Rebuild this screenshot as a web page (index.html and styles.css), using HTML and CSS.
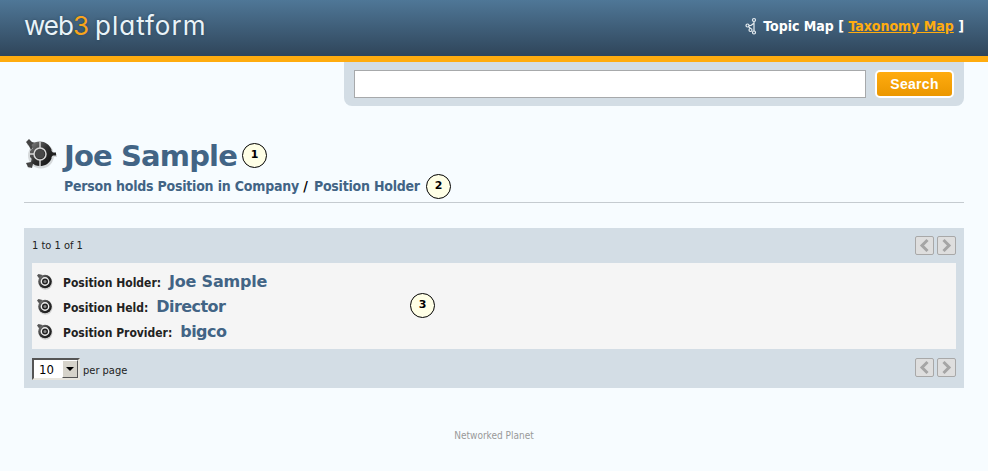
FILE: index.html
```html
<!DOCTYPE html>
<html lang="en">
<head>
<meta charset="utf-8">
<title>Joe Sample - web3 platform</title>
<link rel="stylesheet" href="styles.css">
</head>
<body>
<svg class="defs" width="0" height="0" aria-hidden="true">
  <defs>
    <linearGradient id="metal" x1="0" y1="0" x2="1" y2="1"><stop offset="0" stop-color="#858585"/><stop offset=".5" stop-color="#303030"/><stop offset="1" stop-color="#111"/></linearGradient>
    <symbol id="gear" viewBox="0 0 34 34">
      <g fill="none" stroke="#999" stroke-width="3" opacity=".35" transform="translate(1 1.5)"><circle cx="16" cy="16" r="11.500"/><path d="M3 4l6 6M3 28l6-6M27 16h5"/></g>
      <path d="M2 4l3-3 3 3 4 1-5 7-2-4zM2 25l2 4 4 1 1-4 4-1-5-6-1 5z" fill="#444"/>
      <path d="M25 11l4 3.500h3v3h-3l-4 3.500z" fill="#222"/>
      <path d="M16 3.500c5 0 9.500 3 11.500 8v9c-2 5-6.500 7.500-11.500 7.500-4 0-6-1-8.500-3.500L9 22l-3-3v-6l3-3-1.500-3C10 4.500 12 3.500 16 3.500z" fill="url(#metal)"/>
      <circle cx="16" cy="16" r="6" fill="none" stroke="#d8d8d8" stroke-width="1.500"/>
      <path d="M16 3.500V10M16 22v6.500M6 16h4" stroke="#d8d8d8" stroke-width="1.400"/>
      <circle cx="16" cy="16" r="4.500" fill="#484848"/>
    </symbol>
    <symbol id="dot" viewBox="0 0 18 18">
      <circle cx="9.500" cy="9.800" r="7" fill="#aaa" opacity=".5"/>
      <path d="M1 2.500L2.500 1l4 1-3 4z" fill="#555"/>
      <circle cx="9" cy="8.500" r="6.800" fill="url(#metal)"/>
      <circle cx="9" cy="8.500" r="3.700" fill="#222" stroke="#f0f0f0" stroke-width="1.400"/>
      <circle cx="9" cy="8.500" r="1.500" fill="#888"/>
    </symbol>
  </defs>
</svg>
<header class="header">
  <div class="logo"><span class="logo-web">web<span class="logo-num">3</span></span><span class="logo-platform">platform</span></div>
  <nav class="maps">
    <svg class="map-icon" viewBox="0 0 12 18" fill="none" stroke="#e8eef2" stroke-width="1.200"><circle cx="9" cy="3" r="1.500"/><circle cx="2.500" cy="8.500" r="1.500"/><circle cx="5.500" cy="13" r="1.500"/><circle cx="9" cy="15.500" r="1.500"/><path d="M9 4.500v9.500M4 8.500h2l2.500-2M5.500 11.500l-2-2"/></svg>
    <span class="map-text">Topic Map [ <a href="#">Taxonomy Map</a> ]</span>
  </nav>
</header>
<main class="page">
  <form class="search">
    <input class="query" type="text" aria-label="Search">
    <button class="go" type="button"><span>Search</span></button>
  </form>
  <section class="title">
    <svg class="title-icon"><use href="#gear"/></svg>
    <div>
      <div class="line"><h1>Joe Sample</h1><span class="mark">1</span></div>
      <div class="line crumb-line"><p class="crumb"><a>Person holds Position in Company</a> / <a>Position Holder</a></p><span class="mark">2</span></div>
    </div>
  </section>
  <section class="panel">
    <div class="bar"><span class="small count">1 to 1 of 1</span>
      <div class="pager"><button aria-label="Previous"><svg viewBox="0 0 15 15"><path d="M10.500 2L5 7.500l5.500 5.500"/></svg></button><button aria-label="Next"><svg viewBox="0 0 15 15"><path d="M4.500 2L10 7.500 4.500 13"/></svg></button></div>
    </div>
    <div class="list">
      <div class="row"><svg class="dot"><use href="#dot"/></svg><span class="label">Position Holder:</span><a class="value">Joe Sample</a></div>
      <div class="row"><svg class="dot"><use href="#dot"/></svg><span class="label">Position Held:</span><a class="value value-tight">Director</a></div>
      <div class="row"><svg class="dot"><use href="#dot"/></svg><span class="label">Position Provider:</span><a class="value value-tight">bigco</a></div>
      <span class="mark mark-list">3</span>
    </div>
    <div class="bar foot">
      <div class="size"><div class="select"><span>10</span><i class="drop"></i></div><span class="small per-page">per page</span></div>
      <div class="pager"><button aria-label="Previous"><svg viewBox="0 0 15 15"><path d="M10.500 2L5 7.500l5.500 5.500"/></svg></button><button aria-label="Next"><svg viewBox="0 0 15 15"><path d="M4.500 2L10 7.500 4.500 13"/></svg></button></div>
    </div>
  </section>
  <footer class="footer">Networked Planet</footer>
</main>
</body>
</html>
```
FILE: styles.css
```css
* { box-sizing: border-box; }
body { margin: 0; height: 471px; overflow: hidden; background: #f7fcff; color: #222; font-family: "DejaVu Sans Condensed", "DejaVu Sans", sans-serif; font-stretch: condensed; }
.defs { display: block; }
.header { height: 62px; padding: 0 24px; display: flex; justify-content: space-between; background: linear-gradient(#4f7797, #2f455a); border-bottom: 6px solid #ffac0f; }
.logo { display: flex; font: 400 26px/52px Inter, sans-serif; font-feature-settings: "cv11" 1; color: #eaf3f8; text-shadow: 0 0 3px #2b475c; }
.logo-web { width: 71px; letter-spacing: -1px; }
.logo-platform { letter-spacing: 1px; }
.logo-num { color: #f9a51a; }
.maps { display: flex; align-items: center; height: 52px; gap: 6px; color: #fff; font-size: 14px; font-weight: bold; white-space: nowrap; }
.map-icon { width: 12px; height: 18px; }
.maps a { color: #ffac0f; }
.page { padding: 0 24px; }
.search { margin: 0 0 0 320px; width: 620px; height: 44px; padding: 8px 10px; display: flex; justify-content: space-between; background: #d3dde5; border-radius: 0 0 8px 8px; }
.query { width: 512px; height: 28px; border: 1px solid #a7a9ab; background: #fff; padding: 0 4px; }
.go { width: 79px; height: 28px; padding: 0; border: 2px solid #fff; border-radius: 5px; background: linear-gradient(#ffac0f, #eb9700); color: #fff; font: bold 14px/22px "Liberation Sans", sans-serif; letter-spacing: .3px; }
.title { height: 97px; padding-top: 31px; display: flex; border-bottom: 1px solid #c5cbd0; }
.title-icon { width: 34px; height: 34px; margin: 1px 6px 0 0; }
.line { display: flex; height: 36px; align-items: center; }
h1 { margin: 0; padding-top: 2px; width: 178px; font: bold 29px/36px "DejaVu Sans", sans-serif; font-stretch: normal; letter-spacing: -.85px; color: #426485; white-space: nowrap; }
.crumb-line { height: 26px; }
.crumb { margin: 0; width: 362px; font-size: 14px; font-weight: bold; line-height: 26px; letter-spacing: -.24px; word-spacing: .2px; color: #000; white-space: nowrap; }
.crumb a + a { margin-left: 2px; }
.crumb a, .value { color: #426485; }
.mark { width: 25px; height: 25px; flex: none; border: 1.500px solid #000; border-radius: 50%; background: #ffffe6; color: #000; text-align: center; font: bold 11px/21px "DejaVu Sans", sans-serif; }
.panel { margin-top: 25px; padding: 0 8px; height: 160px; background: #d3dde5; }
.bar { height: 35px; display: flex; justify-content: space-between; align-items: center; }
.small { font-size: 11px; }
.pager { display: flex; gap: 3px; }
.pager button { width: 19px; height: 19px; padding: 1px; border: 1px solid #a8a8a8; border-radius: 2px; background: #dedede; display: flex; }
.pager svg { width: 15px; height: 15px; fill: none; stroke: #a5a5a5; stroke-width: 3; }
.list { position: relative; height: 86px; padding: 6px 4px; background: #f5f5f5; }
.row { height: 25px; display: flex; align-items: center; white-space: nowrap; }
.dot { width: 18px; height: 18px; margin-right: 9px; }
.label { font-size: 12px; font-weight: bold; margin-right: 8px; padding-top: 2px; }
.value { font-size: 16px; font-weight: bold; font-family: "DejaVu Sans", sans-serif; font-stretch: normal; letter-spacing: -.2px; }
.value-tight { letter-spacing: -.55px; }
.mark-list { position: absolute; left: 378px; top: 30px; }
.foot { height: 37px; }
.size { display: flex; align-items: center; gap: 3px; padding-top: 2px; }
.per-page { padding-top: 4px; }
.select { width: 48px; height: 22px; display: flex; justify-content: space-between; border: 2px solid; border-color: #555 #e8e6df #e8e6df #555; background: #fff; color: #000; font-size: 13px; line-height: 19px; padding-left: 5px; }
.drop { width: 16px; height: 18px; background: #d6d3ca; border: 1px solid; border-color: #fff #555 #555 #fff; display: flex; align-items: center; justify-content: center; }
.drop::after { content: ""; border: 4px solid transparent; border-top-color: #000; border-bottom: 0; }
.footer { margin-top: 41px; text-align: center; font-size: 10px; line-height: 14px; color: #999; }
```
